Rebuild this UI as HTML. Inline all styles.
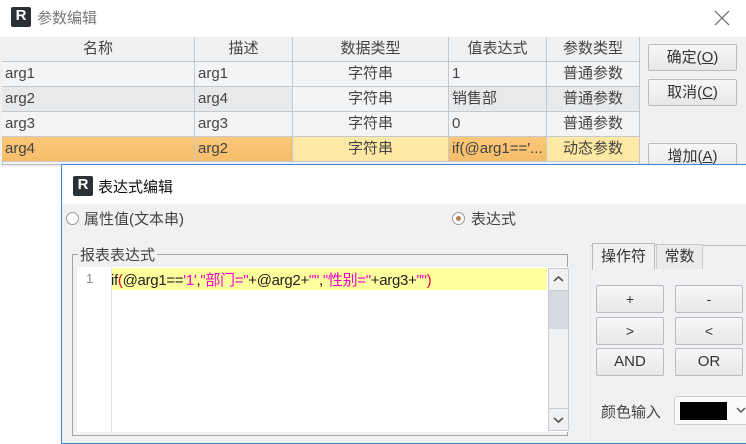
<!DOCTYPE html>
<html><head><meta charset="utf-8"><style>
*{box-sizing:border-box;margin:0;padding:0}
body{width:746px;height:441px;overflow:hidden;background:#fff;font-family:"Liberation Sans","Noto Sans CJK SC",sans-serif;font-size:14px;color:#333;position:relative}
.a{position:absolute}
.logo{position:absolute;width:20px;height:20px;background:#2b2f36;border-radius:2px;color:#fff;font-weight:bold;font-size:15px;line-height:18px;text-align:center}
.cell{position:absolute;height:25px;line-height:24px;border-right:1px solid #c5c9cd;border-bottom:1px solid #c5c9cd;padding-left:3px;white-space:nowrap;overflow:hidden;font-size:15px;color:#444}
.c{text-align:center;padding-left:0}
.btn{position:absolute;border:1px solid #b9bcc0;border-radius:2px;background:linear-gradient(#f7f7f7,#e8e8e8);text-align:center;font-size:14px;color:#333}
u{text-decoration:underline}
</style></head><body>
<div class="logo" style="left:11px;top:7px">R</div>
<div class="a" style="left:37px;top:7px;font-size:15px;color:#777">参数编辑</div>
<svg class="a" style="left:714px;top:10px" width="16" height="16"><path d="M1 1L15 15M15 1L1 15" stroke="#666" stroke-width="1.2"/></svg>
<div class="a" style="left:0;top:37px;width:746px;height:130px;background:#f0f0f0"></div>
<div class="a" style="left:2px;top:37px;width:638px;height:128px;border:1px solid #b8bcc0;background:#f3f4f5"></div>
<div id="g"></div>
<script>
var cols=[[2,193],[195,98],[293,156],[449,98],[547,93]];
var rows=[["名称","描述","数据类型","值表达式","参数类型"],["arg1","arg1","字符串","1","普通参数"],["arg2","arg4","字符串","销售部","普通参数"],["arg3","arg3","字符串","0","普通参数"],["arg4","arg2","字符串","if(@arg1=='...","动态参数"]];
var h="";
rows.forEach(function(r,i){var y=37+i*25;r.forEach(function(t,j){
var bg=i==0?"#eef0f2":(i==2?"#e8e9ea":"#f3f4f5");
if(i==4){bg=(j==0||j==1||j==3)?"linear-gradient(#f9c878,#f5bd6a)":"#fde9a3";}
var cen=(i==0||j==2||j==4);
if(i==2&&j==2)bg="#f3f4f5";
h+='<div class="cell'+(cen?' c':'')+'" style="left:'+cols[j][0]+'px;top:'+y+'px;width:'+cols[j][1]+'px;background:'+bg+'">'+t+'</div>';});});
document.getElementById("g").innerHTML=h;
</script>
<div class="btn" style="left:648px;top:44px;width:89px;height:27px;line-height:25px;font-size:15px">确定(<u>O</u>)</div>
<div class="btn" style="left:648px;top:79px;width:89px;height:27px;line-height:25px;font-size:15px">取消(<u>C</u>)</div>
<div class="btn" style="left:648px;top:143px;width:89px;height:27px;line-height:25px;font-size:15px">增加(<u>A</u>)</div>

<div class="a" style="left:61px;top:164px;width:690px;height:280px;border:1px solid #3b87d6;background:#f0f1f2">
<div class="a" style="left:0;top:0;width:690px;height:39px;background:#fff"></div>
<div class="logo" style="left:11px;top:11px">R</div>
<div class="a" style="left:36px;top:11px;font-size:15px;color:#111">表达式编辑</div>
<div class="a" style="left:4px;top:47px;width:13px;height:13px;border:1px solid #999;border-radius:50%;background:#fff"></div>
<div class="a" style="left:22px;top:43px;font-size:15px;color:#444">属性值(文本串)</div>
<div class="a" style="left:390px;top:47px;width:13px;height:13px;border:1px solid #999;border-radius:50%;background:#fff"><div class="a" style="left:3px;top:3px;width:5px;height:5px;border-radius:50%;background:#b3814d"></div></div>
<div class="a" style="left:409px;top:43px;font-size:15px;color:#444">表达式</div>
<div class="a" style="left:10px;top:89px;width:496px;height:182px;border:1px solid #a9a59d"></div>
<div class="a" style="left:16px;top:79px;padding:0 2px;background:#f0f1f2;font-size:15px;color:#444">报表表达式</div>
<div class="a" style="left:15px;top:102px;width:491px;height:165px;background:#fff"></div>
<div class="a" style="left:49px;top:102px;width:1px;height:165px;background:#e3e3e3"></div>
<div class="a" style="left:50px;top:103px;width:435px;height:22px;background:#ffff9e"></div>
<div class="a" style="left:24px;top:106px;font-size:13px;color:#888">1</div>
<div class="a" style="left:49px;top:104px;font-size:15px;color:#222;white-space:nowrap;letter-spacing:-0.3px">if<span style="color:#e03">(</span>@arg1==<span style="color:#e0c">'1'</span>,<span style="color:#e0c">"部门="</span>+@arg2+<span style="color:#e0c">""</span>,<span style="color:#e0c">"性别="</span>+arg3+<span style="color:#e0c">""</span><span style="color:#e03">)</span></div>
<div class="a" style="left:486px;top:103px;width:21px;height:163px;background:#f0f1f3;border:1px solid #c8cbd0"></div>
<div class="a" style="left:486px;top:103px;width:21px;height:23px;border:1px solid #c8cbd0"><svg width="19" height="21"><path d="M5 12L9.5 8L14 12" stroke="#555" stroke-width="1.6" fill="none"/></svg></div>
<div class="a" style="left:487px;top:126px;width:19px;height:38px;background:#d6d9df"></div>
<div class="a" style="left:486px;top:243px;width:21px;height:23px;border:1px solid #c8cbd0"><svg width="19" height="21"><path d="M5 9L9.5 13L14 9" stroke="#555" stroke-width="1.6" fill="none"/></svg></div>

<div class="a" style="left:528px;top:80px;width:170px;height:195px;border-top:1px solid #bbb;border-left:1px solid #e4e4e4"></div>
<div class="a" style="left:530px;top:78px;width:63px;height:27px;border:1px solid #bbb;border-bottom:none;background:#f0f1f2;text-align:center;line-height:26px;font-size:15px">操作符</div>
<div class="a" style="left:594px;top:79px;width:47px;height:25px;border:1px solid #ccc;border-bottom:none;background:#eaebec;text-align:center;line-height:24px;font-size:15px">常数</div>
<div class="btn" style="left:534px;top:120px;width:68px;height:28px;line-height:26px">+</div>
<div class="btn" style="left:613px;top:120px;width:68px;height:28px;line-height:26px">-</div>
<div class="btn" style="left:534px;top:152px;width:68px;height:28px;line-height:26px">&gt;</div>
<div class="btn" style="left:613px;top:152px;width:68px;height:28px;line-height:26px">&lt;</div>
<div class="btn" style="left:534px;top:183px;width:68px;height:28px;line-height:26px;font-size:15px">AND</div>
<div class="btn" style="left:613px;top:183px;width:68px;height:28px;line-height:26px;font-size:15px">OR</div>
<div class="a" style="left:539px;top:236px;font-size:15px;color:#444">颜色输入</div>
<div class="a" style="left:612px;top:231px;width:80px;height:29px;border:1px solid #ccc;border-radius:3px;background:#fafafa"></div>
<div class="a" style="left:618px;top:237px;width:47px;height:18px;background:#000"></div>
<svg class="a" style="left:674px;top:241px" width="10" height="8"><path d="M1 2L5 6L9 2" stroke="#555" stroke-width="1.5" fill="none"/></svg>
</div>
</body></html>
